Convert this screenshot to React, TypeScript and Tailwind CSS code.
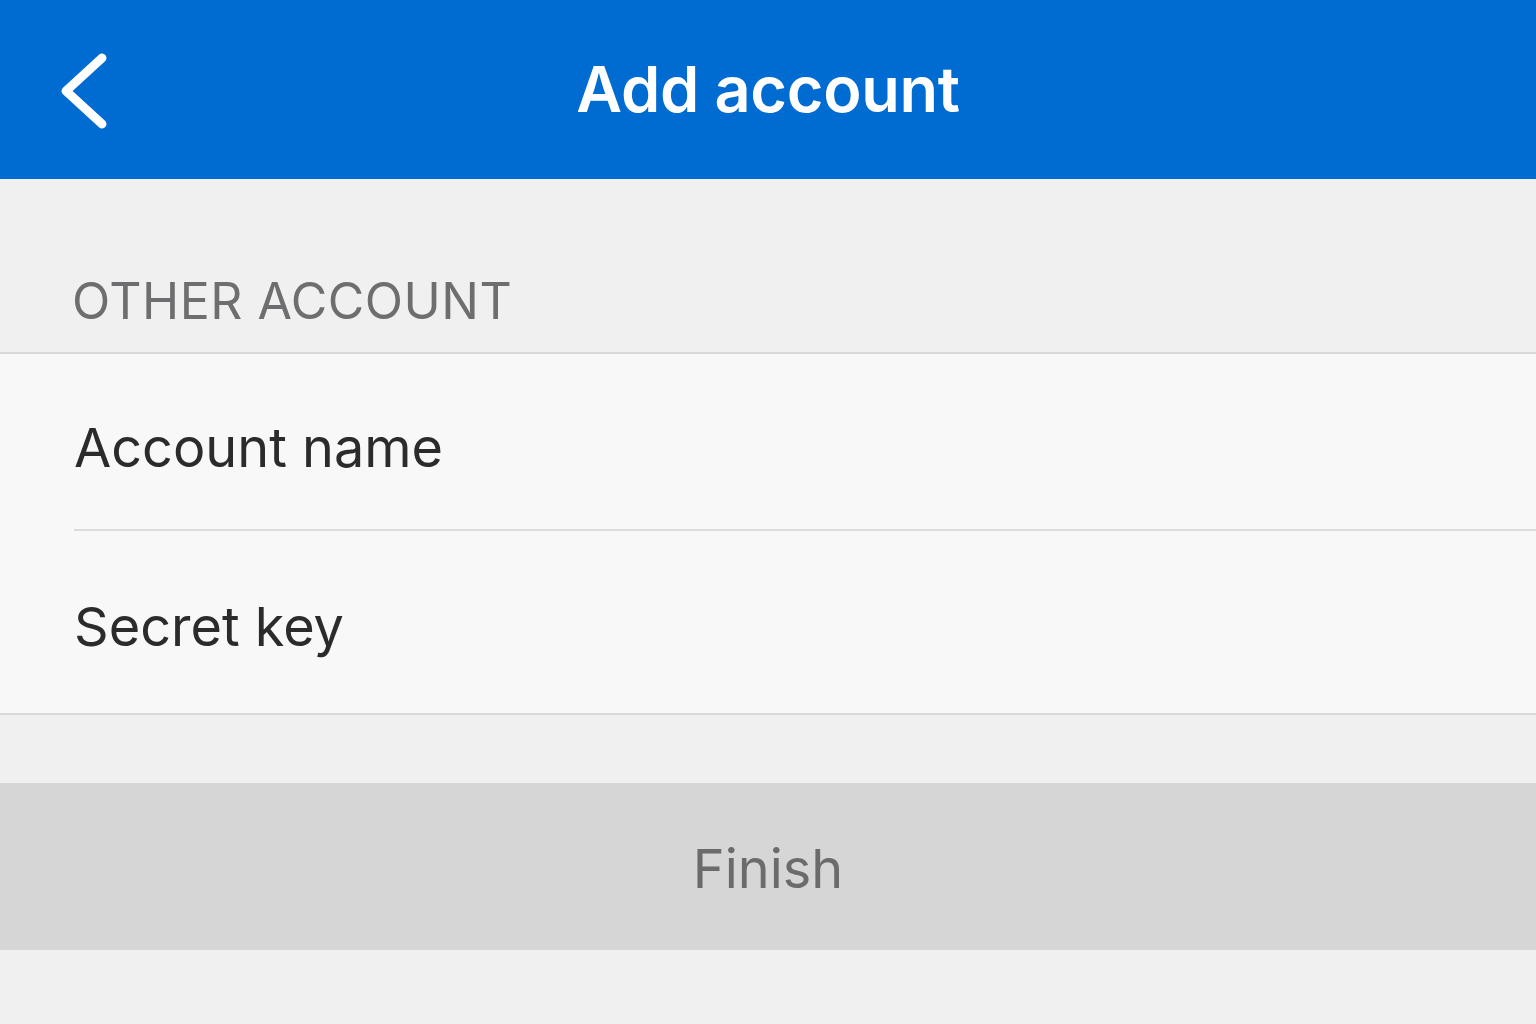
import React from "react";

export default function App() {
  return (
    <div className="w-[1536px] h-[1024px] bg-[#f0f0f0] flex flex-col overflow-hidden" style={{ fontFamily: "Inter, 'Liberation Sans', sans-serif" }}>
      <header className="h-[179px] bg-[#006bd0] relative flex items-center justify-center shrink-0">
        <svg className="absolute left-[58px] top-[52px]" width="52" height="78" viewBox="0 0 52 78" fill="none">
          <path d="M44 6 L8 39 L44 72" stroke="white" strokeWidth="9" strokeLinecap="round" strokeLinejoin="round" />
        </svg>
        <h1 className="text-white text-[63px] font-semibold tracking-[-0.3px] leading-none">Add account</h1>
      </header>
      <div className="h-[173px] flex items-end pl-[72px] pb-[26px] shrink-0">
        <span className="text-[#6e6e70] text-[50px] leading-none tracking-[0.5px]">OTHER ACCOUNT</span>
      </div>
      <div className="bg-[#f8f8f8] border-y-2 border-[#d9d9db] shrink-0">
        <div className="ml-[74px] h-[177px] flex items-center pt-[12px] border-b-2 border-[#dcdcdc]">
          <span className="text-[#2b2b2b] text-[54px] leading-none">Account name</span>
        </div>
        <div className="ml-[74px] h-[182px] flex items-center pt-[10px]">
          <span className="text-[#2b2b2b] text-[54px] leading-none">Secret key</span>
        </div>
      </div>
      <div className="h-[68px] shrink-0" />
      <div className="h-[167px] bg-[#d6d6d6] flex items-center justify-center shrink-0">
        <span className="text-[#6b6b6d] text-[54px] leading-none pt-[4px]">Finish</span>
      </div>
    </div>
  );
}
